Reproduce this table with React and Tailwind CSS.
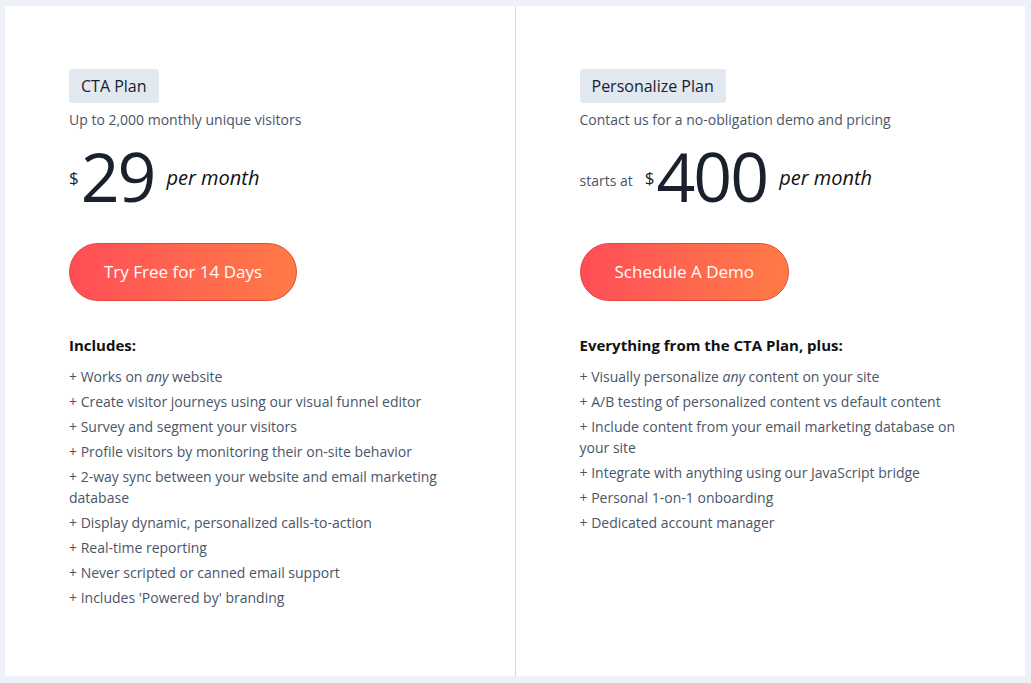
const PLANS = [
  {
    name: 'CTA Plan',
    blurb: 'Up to 2,000 monthly unique visitors',
    prefix: null,
    price: '29',
    cta: 'Try Free for 14 Days',
    heading: 'Includes:',
    items: [
      <>Works on <em>any</em> website</>,
      'Create visitor journeys using our visual funnel editor',
      'Survey and segment your visitors',
      'Profile visitors by monitoring their on-site behavior',
      '2-way sync between your website and email marketing database',
      'Display dynamic, personalized calls-to-action',
      'Real-time reporting',
      'Never scripted or canned email support',
      "Includes 'Powered by' branding",
    ],
  },
  {
    name: 'Personalize Plan',
    blurb: 'Contact us for a no-obligation demo and pricing',
    prefix: 'starts at',
    price: '400',
    cta: 'Schedule A Demo',
    heading: 'Everything from the CTA Plan, plus:',
    items: [
      <>Visually personalize <em>any</em> content on your site</>,
      'A/B testing of personalized content vs default content',
      'Include content from your email marketing database on your site',
      'Integrate with anything using our JavaScript bridge',
      'Personal 1-on-1 onboarding',
      'Dedicated account manager',
    ],
  },
]

function Plan({ plan, last }) {
  return (
    <div className={`flex-1 bg-white px-16 pt-[63px] pb-10 ${last ? '' : 'border-r border-[#d4d8de]'}`}>
      <span className="inline-block bg-[#e2e8f0] rounded-[3px] px-3 py-[6px] text-[16px] leading-[22px] font-medium text-[#1a202c]">
        {plan.name}
      </span>

      <p className="mt-[7px] text-[14px] leading-5 font-medium text-[#4a5568]">{plan.blurb}</p>

      <div className="mt-[14px] flex items-center h-[64px]">
        {plan.prefix && (
          <span className="text-[14px] font-medium text-[#4a5568] mr-3 mt-2">{plan.prefix}</span>
        )}
        <span className="text-[17px] text-[#1a202c] mt-[4px] mr-[2px]">$</span>
        <span className="text-[68px] leading-none text-[#1a202c] tracking-[-2px]">{plan.price}</span>
        <span className="ml-[12px] mt-[3px] text-[20px] italic font-medium text-[#111]">per month</span>
      </div>

      <button className="mt-[35px] h-[58px] px-[34px] rounded-full bg-gradient-to-r from-[#ff4d57] to-[#ff7a45] border border-[#e24b3b] text-white text-[17px] font-medium">
        {plan.cta}
      </button>

      <h3 className="mt-[33px] text-[15px] font-bold text-[#111]">{plan.heading}</h3>

      <ul className="mt-[9px] flex flex-col gap-[4px]">
        {plan.items.map((it, i) => (
          <li key={i} className="text-[14px] leading-[21px] font-medium text-[#4a5568]">+ {it}</li>
        ))}
      </ul>
    </div>
  )
}

export default function App() {
  return (
    <div
      className="w-[1031px] h-[683px] bg-[#eef2f8] pt-[6px] pl-[5px] pr-[6px] pb-[7px]"
      style={{ fontFamily: '"Open Sans", sans-serif' }}
    >
      <div className="flex h-full">
        {PLANS.map((p, i) => (
          <Plan key={p.name} plan={p} last={i === PLANS.length - 1} />
        ))}
      </div>
    </div>
  )
}
